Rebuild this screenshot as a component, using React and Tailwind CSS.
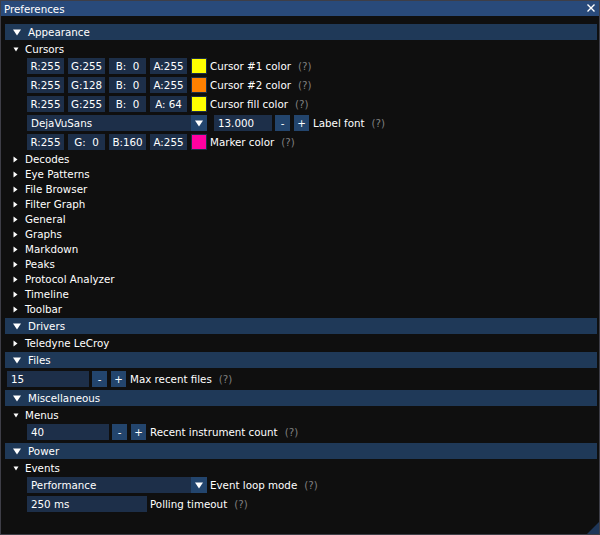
import React from "react";

const HeaderTri = () => (
  <svg width="8" height="7" viewBox="0 0 8 7" className="block">
    <polygon points="0,0.5 8,0.5 4,6.5" fill="#ffffff" />
  </svg>
);
const TreeDown = () => (
  <svg width="6" height="5" viewBox="0 0 6 5" className="block">
    <polygon points="0.5,0.5 5.5,0.5 3,4.5" fill="#ffffff" />
  </svg>
);
const TreeRight = () => (
  <svg width="5" height="7" viewBox="0 0 5 7" className="block">
    <polygon points="0.5,0.5 4.5,3.5 0.5,6.5" fill="#ffffff" />
  </svg>
);

const Header = ({ label }) => (
  <div className="h-[16px] bg-[#1f3958] flex items-center">
    <div className="w-[23px] pl-[8px] flex items-center">
      <HeaderTri />
    </div>
    <span>{label}</span>
  </div>
);

const Tree = ({ label, open }) => (
  <div className="h-[12px] flex items-center">
    <div className="w-[20px] pl-[8px] flex items-center">
      {open ? <TreeDown /> : <TreeRight />}
    </div>
    <span>{label}</span>
  </div>
);

const Help = () => <span className="ml-[7px] text-[#808080]">(?)</span>;

const Drag = ({ t, first }) => (
  <div
    className={
      "w-[37px] h-[16px] bg-[#1d2f49] flex items-center justify-center whitespace-pre " +
      (first ? "" : "ml-[4px]")
    }
  >
    {t}
  </div>
);

const ColorRow = ({ r, g, b, a, swatch, label }) => (
  <div className="h-[16px] flex items-center pl-[22px]">
    <Drag t={r} first />
    <Drag t={g} />
    <Drag t={b} />
    <Drag t={a} />
    <div className={"w-[16px] h-[16px] ml-[4px] border border-[#1d2f49] " + swatch} />
    <span className="ml-[3px]">{label}</span>
    <Help />
  </div>
);

const Btn = ({ t, cls }) => (
  <div className={"w-[15px] h-[16px] bg-[#23456d] flex items-center justify-center " + cls}>{t}</div>
);

const IntInput = ({ value, w, label }) => (
  <>
    <div className={"h-[16px] bg-[#1d2f49] flex items-center pl-[4px] " + w}>{value}</div>
    <Btn t="-" cls="ml-[3px]" />
    <Btn t="+" cls="ml-[4px]" />
    <span className="ml-[4px]">{label}</span>
    <Help />
  </>
);

const Combo = ({ value }) => (
  <div className="w-[180px] h-[16px] bg-[#1d2f49] flex items-center">
    <span className="flex-1 pl-[4px]">{value}</span>
    <div className="w-[16px] h-[16px] bg-[#23456d] flex items-center justify-center">
      <HeaderTri />
    </div>
  </div>
);

export default function App() {
  return (
    <div className="w-[600px] h-[535px] bg-[#0f0f0f] border border-[#3e3e47] relative overflow-hidden font-['DejaVu_Sans',sans-serif] text-[10.3px] leading-[12px] text-white">
      <div className="h-[15px] bg-[#294a7a] flex items-center pl-[3px] relative">
        <span>Preferences</span>
        <svg width="8" height="8" viewBox="0 0 8 8" className="absolute left-[586px] top-[3px]">
          <path d="M0.5 0.5 L7.5 7.5 M7.5 0.5 L0.5 7.5" stroke="#ffffff" strokeWidth="1.4" />
        </svg>
      </div>
      <div className="pt-[8px] pl-[4px] pr-[2px] flex flex-col gap-[3px]">
        <Header label="Appearance" />
        <Tree label="Cursors" open />
        <ColorRow r="R:255" g="G:255" b="B:  0" a="A:255" swatch="bg-[#ffff00]" label="Cursor #1 color" />
        <ColorRow r="R:255" g="G:128" b="B:  0" a="A:255" swatch="bg-[#ff8000]" label="Cursor #2 color" />
        <ColorRow r="R:255" g="G:255" b="B:  0" a="A: 64" swatch="bg-[#ffff00]" label="Cursor fill color" />
        <div className="h-[16px] flex items-center pl-[22px]">
          <Combo value="DejaVuSans" />
          <div className="ml-[7px] flex items-center">
            <IntInput value="13.000" w="w-[58px]" label="Label font" />
          </div>
        </div>
        <ColorRow r="R:255" g="G:  0" b="B:160" a="A:255" swatch="bg-[#ff00a0]" label="Marker color" />
        <Tree label="Decodes" />
        <Tree label="Eye Patterns" />
        <Tree label="File Browser" />
        <Tree label="Filter Graph" />
        <Tree label="General" />
        <Tree label="Graphs" />
        <Tree label="Markdown" />
        <Tree label="Peaks" />
        <Tree label="Protocol Analyzer" />
        <Tree label="Timeline" />
        <Tree label="Toolbar" />
        <Header label="Drivers" />
        <Tree label="Teledyne LeCroy" />
        <Header label="Files" />
        <div className="h-[16px] flex items-center pl-[2px]">
          <IntInput value="15" w="w-[82px]" label="Max recent files" />
        </div>
        <Header label="Miscellaneous" />
        <Tree label="Menus" open />
        <div className="h-[16px] flex items-center pl-[22px]">
          <IntInput value="40" w="w-[82px]" label="Recent instrument count" />
        </div>
        <Header label="Power" />
        <Tree label="Events" open />
        <div className="h-[16px] flex items-center pl-[22px]">
          <Combo value="Performance" />
          <span className="ml-[3px]">Event loop mode</span>
          <Help />
        </div>
        <div className="h-[16px] flex items-center pl-[22px]">
          <div className="w-[120px] h-[16px] bg-[#1d2f49] flex items-center pl-[4px]">250 ms</div>
          <span className="ml-[3px]">Polling timeout</span>
          <Help />
        </div>
      </div>
      <svg width="12" height="12" viewBox="0 0 12 12" className="absolute right-0 bottom-0">
        <polygon points="12,0 12,12 0,12" fill="#1e3658" />
      </svg>
    </div>
  );
}
